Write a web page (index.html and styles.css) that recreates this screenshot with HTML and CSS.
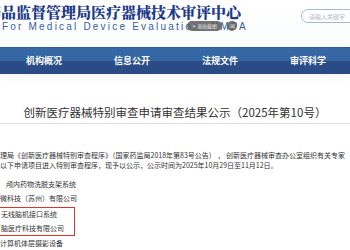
FILE: index.html
```html
<!DOCTYPE html>
<html lang="zh-CN">
<head>
    <meta charset="UTF-8">
    <title>创新医疗器械特别审查申请审查结果公示</title>
    <link rel="stylesheet" href="styles.css">
</head>
<body>

    <div class="header">
        <div class="brand">
            <div class="brand-cn">国家药品监督管理局医疗器械技术审评中心</div>
            <div class="brand-en">For Medical Device Evaluation. NMPA</div>
        </div>
        <div class="search">
            <span class="search-hint">请输入关键字</span>
        </div>

        <!-- 截图工具浮层 -->
        <div class="snap-bar">
            <span class="snap-exit">✕ 退出截图</span>
            <span class="snap-btn">⊞</span>
        </div>
    </div>

    <div class="nav">
        <a class="nav-item">机构概况</a>
        <a class="nav-item">信息公开</a>
        <a class="nav-item">法规文件</a>
        <a class="nav-item">审评科学</a>
    </div>

    <div class="article">
        <h1 class="article-title">创新医疗器械特别审查申请审查结果公示（2025年第10号）</h1>

        <div class="notice">
            <p>理局《创新医疗器械特别审查程序》（国家药监局2018年第83号公告）&nbsp;，&nbsp;创新医疗器械审查办公室组织有关专家</p>
            <p>以下申请项目进入特别审查程序，现予以公示，公示时间为2025年10月29日至11月12日。</p>
        </div>

        <div class="items">
            <p class="item indent">颅内药物洗脱支架系统</p>
            <p class="item">微科技（苏州）有限公司</p>
            <div class="highlight">
                <p class="item">无线脑机接口系统</p>
                <p class="item">脑医疗科技有限公司</p>
            </div>
            <p class="item">计算机体层摄影设备</p>
        </div>
    </div>

</body>
</html>
```

FILE: styles.css
```css
/* 基本样式 */
body {
    margin: 0;
    width: 350px;
    height: 250px;
    overflow: hidden;
    background: #fff;
    font-family: "Noto Sans CJK SC", "Liberation Sans", sans-serif;
    color: #333;
}

p {
    margin: 0;
}

/* 顶部 */
.header {
    position: relative;
    display: flex;
    height: 47px;
    background: linear-gradient(#ffffff, #fbfcfe);
}

.brand {
    flex: none;
    padding-top: 3px;
}

.brand-cn {
    margin-left: -44px;
    font-family: "Noto Serif CJK SC", "Noto Sans CJK SC", serif;
    font-size: 15px;
    line-height: 17px;
    font-weight: 900;
    color: #1d3b8c;
    white-space: nowrap;
}

.brand-en {
    margin-left: 2px;
    margin-top: 1px;
    font-family: "Liberation Sans", Arial, sans-serif;
    font-size: 10px;
    line-height: 11px;
    letter-spacing: 2.2px;
    color: #3460a5;
    white-space: nowrap;
}

.search {
    flex: none;
    margin-left: auto;
    margin-right: -30px;
    margin-top: 9px;
    width: 70px;
    height: 12px;
    border: 1px solid #a4b9da;
    border-radius: 8px;
    padding-left: 7px;
    display: flex;
    align-items: center;
}

.search-hint {
    font-size: 6px;
    color: #b0b6c0;
    white-space: nowrap;
}

/* 截图浮层 */
.snap-bar {
    position: absolute;
    left: 187px;
    top: 21px;
    display: flex;
    gap: 5px;
}

.snap-bar::after {
    content: "";
    position: absolute;
    left: 10px;
    top: 8px;
    width: 64px;
    height: 14px;
    background: rgba(0, 0, 0, 0.16);
    filter: blur(7px);
    z-index: -1;
}

.snap-exit {
    width: 35px;
    height: 10px;
    border-radius: 5px;
    background: rgba(90, 90, 90, 0.85);
    color: #e8e8e8;
    font-size: 5px;
    line-height: 10px;
    text-align: center;
    white-space: nowrap;
}

.snap-btn {
    width: 10px;
    height: 10px;
    border-radius: 50%;
    background: rgba(90, 90, 90, 0.85);
    color: #e8e8e8;
    font-size: 6px;
    line-height: 10px;
    text-align: center;
}

/* 导航 */
.nav {
    display: grid;
    grid-template-columns: repeat(4, 88px);
    height: 26px;
    border-top: 1px solid #2c5b98;
    background: linear-gradient(#3668a5 0%, #3466a3 48%, #2b4c87 52%, #2a4a84 100%);
    box-shadow: 0 3px 8px rgba(0, 0, 0, 0.05);
}

.nav-item {
    color: #fff;
    font-size: 9px;
    font-weight: bold;
    line-height: 26px;
    text-align: center;
    white-space: nowrap;
}

/* 正文 */
.article {
    padding-top: 30px;
}

.article-title {
    margin: 0;
    padding-bottom: 3px;
    border-bottom: 1px solid #e0e0e0;
    font-size: 11.5px;
    line-height: 16px;
    font-weight: normal;
    color: #333;
    text-align: center;
    white-space: nowrap;
}

.notice {
    margin-top: 26px;
    font-size: 7px;
    line-height: 10px;
    white-space: nowrap;
}

.items {
    margin-top: 7px;
    font-size: 7px;
    line-height: 14px;
    white-space: nowrap;
}

.item.indent {
    padding-left: 6px;
}

.highlight {
    width: 73px;
    margin-left: -3px;
    margin-top: 2px;
    padding-left: 3px;
    border: 1px solid #e5302c;
}

.highlight .item {
    line-height: 13.5px;
}
```
